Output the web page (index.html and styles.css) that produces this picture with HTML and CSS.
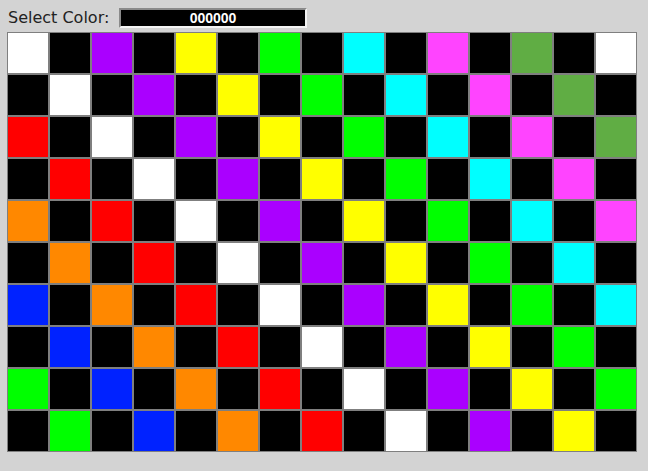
FILE: index.html
```html
<!DOCTYPE html>
<html>
<head>
<meta charset="utf-8">
<link rel="stylesheet" href="styles.css">
</head>
<body>
<div class="page">
  <div class="header">
    <span class="label">Select Color:</span>
    <div class="value">000000</div>
  </div>
  <div class="grid">
    <div class="cell w"></div><div class="cell k"></div><div class="cell p"></div><div class="cell k"></div><div class="cell y"></div><div class="cell k"></div><div class="cell g"></div><div class="cell k"></div><div class="cell c"></div><div class="cell k"></div><div class="cell m"></div><div class="cell k"></div><div class="cell o"></div><div class="cell k"></div><div class="cell w"></div>
    <div class="cell k"></div><div class="cell w"></div><div class="cell k"></div><div class="cell p"></div><div class="cell k"></div><div class="cell y"></div><div class="cell k"></div><div class="cell g"></div><div class="cell k"></div><div class="cell c"></div><div class="cell k"></div><div class="cell m"></div><div class="cell k"></div><div class="cell o"></div><div class="cell k"></div>
    <div class="cell r"></div><div class="cell k"></div><div class="cell w"></div><div class="cell k"></div><div class="cell p"></div><div class="cell k"></div><div class="cell y"></div><div class="cell k"></div><div class="cell g"></div><div class="cell k"></div><div class="cell c"></div><div class="cell k"></div><div class="cell m"></div><div class="cell k"></div><div class="cell o"></div>
    <div class="cell k"></div><div class="cell r"></div><div class="cell k"></div><div class="cell w"></div><div class="cell k"></div><div class="cell p"></div><div class="cell k"></div><div class="cell y"></div><div class="cell k"></div><div class="cell g"></div><div class="cell k"></div><div class="cell c"></div><div class="cell k"></div><div class="cell m"></div><div class="cell k"></div>
    <div class="cell n"></div><div class="cell k"></div><div class="cell r"></div><div class="cell k"></div><div class="cell w"></div><div class="cell k"></div><div class="cell p"></div><div class="cell k"></div><div class="cell y"></div><div class="cell k"></div><div class="cell g"></div><div class="cell k"></div><div class="cell c"></div><div class="cell k"></div><div class="cell m"></div>
    <div class="cell k"></div><div class="cell n"></div><div class="cell k"></div><div class="cell r"></div><div class="cell k"></div><div class="cell w"></div><div class="cell k"></div><div class="cell p"></div><div class="cell k"></div><div class="cell y"></div><div class="cell k"></div><div class="cell g"></div><div class="cell k"></div><div class="cell c"></div><div class="cell k"></div>
    <div class="cell b"></div><div class="cell k"></div><div class="cell n"></div><div class="cell k"></div><div class="cell r"></div><div class="cell k"></div><div class="cell w"></div><div class="cell k"></div><div class="cell p"></div><div class="cell k"></div><div class="cell y"></div><div class="cell k"></div><div class="cell g"></div><div class="cell k"></div><div class="cell c"></div>
    <div class="cell k"></div><div class="cell b"></div><div class="cell k"></div><div class="cell n"></div><div class="cell k"></div><div class="cell r"></div><div class="cell k"></div><div class="cell w"></div><div class="cell k"></div><div class="cell p"></div><div class="cell k"></div><div class="cell y"></div><div class="cell k"></div><div class="cell g"></div><div class="cell k"></div>
    <div class="cell g"></div><div class="cell k"></div><div class="cell b"></div><div class="cell k"></div><div class="cell n"></div><div class="cell k"></div><div class="cell r"></div><div class="cell k"></div><div class="cell w"></div><div class="cell k"></div><div class="cell p"></div><div class="cell k"></div><div class="cell y"></div><div class="cell k"></div><div class="cell g"></div>
    <div class="cell k"></div><div class="cell g"></div><div class="cell k"></div><div class="cell b"></div><div class="cell k"></div><div class="cell n"></div><div class="cell k"></div><div class="cell r"></div><div class="cell k"></div><div class="cell w"></div><div class="cell k"></div><div class="cell p"></div><div class="cell k"></div><div class="cell y"></div><div class="cell k"></div>
  </div>
</div>
</body>
</html>
```

FILE: styles.css
```css
html, body {
  margin: 0;
  padding: 0;
  background: #d3d3d3;
}
.page {
  padding: 8px 0 0 7px;
}
.header {
  display: flex;
  align-items: center;
  height: 20px;
  margin-bottom: 4px;
}
.label {
  font-family: "DejaVu Sans", Verdana, sans-serif;
  font-size: 16px;
  color: #222;
  margin-left: 1px;
  width: 111px;
  line-height: 20px;
}
.value {
  box-sizing: border-box;
  width: 188px;
  height: 20px;
  background: #000;
  color: #fff;
  font-family: "Liberation Sans", Arial, sans-serif;
  font-weight: bold;
  font-size: 14px;
  line-height: 16px;
  text-align: center;
  border: 2px solid;
  border-color: #8a8a8a #f4f4f4 #f4f4f4 #8a8a8a;
}
.grid {
  display: grid;
  grid-template-columns: repeat(15, 42px);
  grid-auto-rows: 42px;
}
.cell {
  box-sizing: border-box;
  border: 1px solid #7f7f7f;
}
.w { background: #ffffff; }
.k { background: #000000; }
.p { background: #aa00ff; }
.y { background: #ffff00; }
.g { background: #00ff00; }
.c { background: #00ffff; }
.m { background: #ff44ff; }
.o { background: #60ad44; }
.r { background: #ff0000; }
.n { background: #ff8800; }
.b { background: #0022ff; }
```
